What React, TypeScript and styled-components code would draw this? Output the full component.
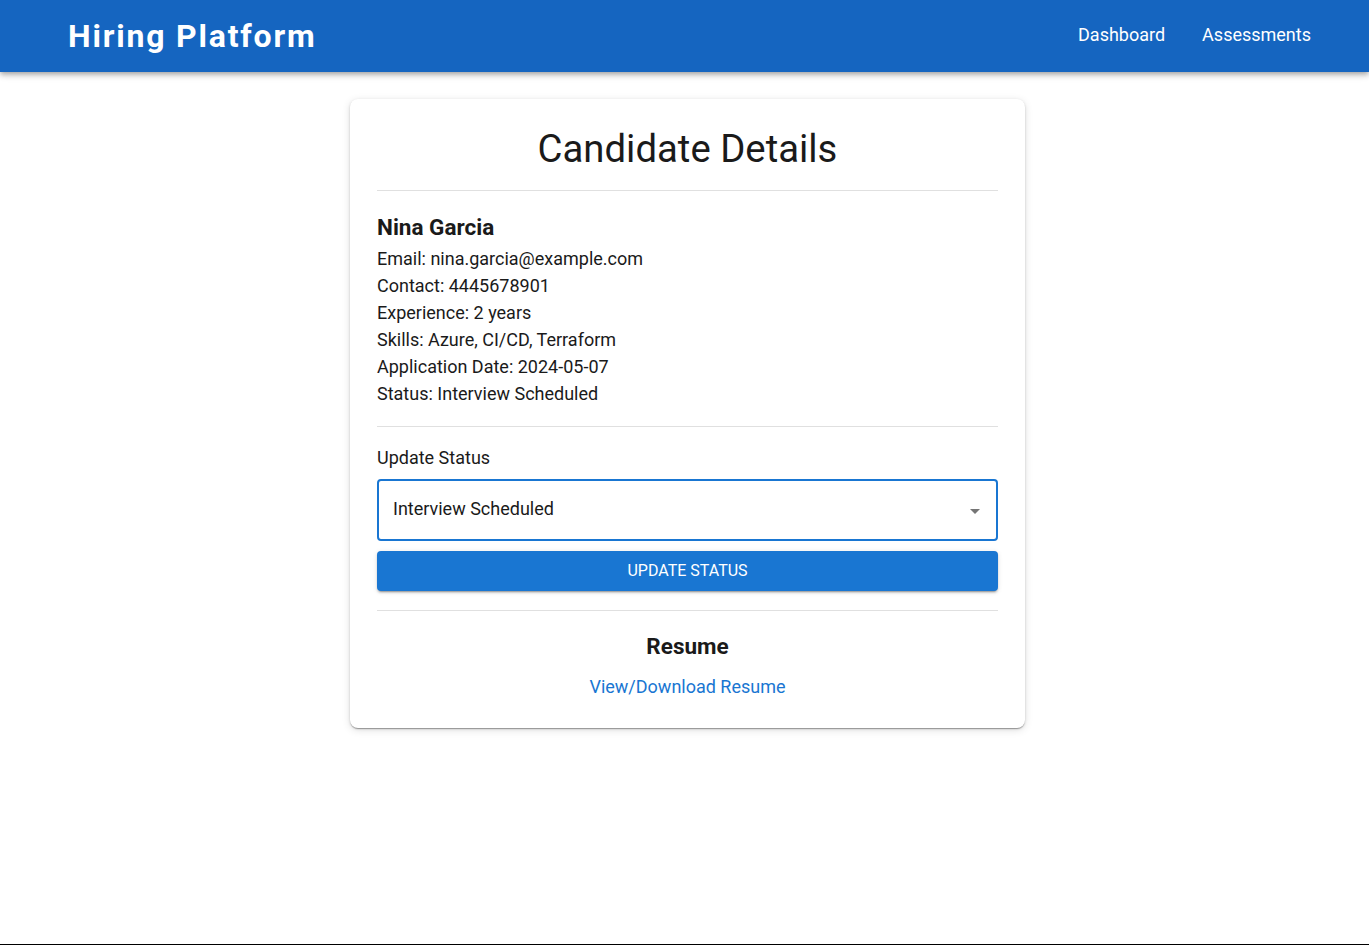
import React from "react";
import styled, { createGlobalStyle } from "styled-components";

const GlobalStyle = createGlobalStyle`
  html, body {
    margin: 0;
    padding: 0;
    background: #fff;
    font-family: Roboto, "Helvetica Neue", Arial, sans-serif;
    color: rgba(0, 0, 0, 0.87);
  }
  * { box-sizing: border-box; }
`;

const Page = styled.div`
  min-height: 945px;
  border-bottom: 1px solid #000;
`;

const AppBar = styled.header`
  height: 72px;
  background: #1565c0;
  color: #fff;
  display: flex;
  align-items: center;
  justify-content: space-between;
  padding: 0 58px 0 68px;
  box-shadow: 0 2px 4px -1px rgba(0, 0, 0, 0.2), 0 4px 5px 0 rgba(0, 0, 0, 0.14),
    0 1px 10px 0 rgba(0, 0, 0, 0.12);
`;

const Brand = styled.div`
  font-size: 32px;
  font-weight: 700;
  letter-spacing: 1.8px;
`;

const Nav = styled.nav`
  display: flex;
  gap: 37px;
`;

const NavLink = styled.a`
  font-size: 18px;
  font-weight: 400;
  color: #fff;
  text-decoration: none;
  margin-top: -3px;
`;

const Main = styled.main`
  display: flex;
  justify-content: center;
  padding: 27px 0 0 6px;
`;

const Card = styled.section`
  width: 675px;
  background: #fff;
  border-radius: 8px;
  padding: 25px 27px 29px;
  box-shadow: 0 2px 1px -1px rgba(0, 0, 0, 0.2), 0 1px 1px 0 rgba(0, 0, 0, 0.14),
    0 1px 3px 0 rgba(0, 0, 0, 0.12), 0 2px 8px rgba(0, 0, 0, 0.12);
`;

const Title = styled.h1`
  margin: 0;
  text-align: center;
  font-size: 38.3px;
  font-weight: 400;
  line-height: 50px;
  color: #1a1a1a;
`;

const Divider = styled.hr<{ $top: number; $bottom: number }>`
  border: none;
  border-top: 1px solid #e0e0e0;
  margin: ${(p) => p.$top}px 0 ${(p) => p.$bottom}px;
`;

const Name = styled.h2`
  margin: 0 0 3px;
  font-size: 22.5px;
  font-weight: 700;
  line-height: 30px;
  color: #1a1a1a;
`;

const Info = styled.p`
  margin: 0;
  font-size: 18px;
  line-height: 27px;
  color: #1a1a1a;
`;

const Label = styled.div`
  font-size: 18px;
  line-height: 24px;
  color: #1a1a1a;
  margin-bottom: 9px;
`;

const Select = styled.div`
  height: 62px;
  border: 2px solid #1976d2;
  border-radius: 4px;
  display: flex;
  align-items: center;
  justify-content: space-between;
  padding: 0 16px 3px 14px;
  font-size: 18px;
  color: #1a1a1a;
`;

const Caret = styled.span`
  width: 0;
  height: 0;
  border-left: 5px solid transparent;
  border-right: 5px solid transparent;
  border-top: 5px solid #757575;
  margin-top: 5px;
`;

const Button = styled.button`
  display: block;
  width: 100%;
  height: 40px;
  margin-top: 10px;
  padding-bottom: 2px;
  border: none;
  border-radius: 4px;
  background: #1976d2;
  color: #fff;
  font-family: Roboto, sans-serif;
  font-size: 16px;
  font-weight: 400;
  text-transform: uppercase;
  box-shadow: 0 3px 1px -2px rgba(0, 0, 0, 0.2), 0 2px 2px 0 rgba(0, 0, 0, 0.14),
    0 1px 5px 0 rgba(0, 0, 0, 0.12);
`;

const Centered = styled.div`
  text-align: center;
`;

const SubTitle = styled.h3`
  margin: 0 0 13px;
  font-size: 22.5px;
  font-weight: 700;
  line-height: 32px;
  color: #1a1a1a;
`;

const ResumeLink = styled.a`
  display: inline-block;
  color: #1976d2;
  font-size: 18px;
  line-height: 24px;
  text-decoration: none;
`;

const candidate = {
  name: "Nina Garcia",
  email: "nina.garcia@example.com",
  contact: "4445678901",
  experience: "2 years",
  skills: "Azure, CI/CD, Terraform",
  applied: "2024-05-07",
  status: "Interview Scheduled",
};

export default function App() {
  return (
    <Page>
      <GlobalStyle />
      <AppBar>
        <Brand>Hiring Platform</Brand>
        <Nav>
          <NavLink href="#">Dashboard</NavLink>
          <NavLink href="#">Assessments</NavLink>
        </Nav>
      </AppBar>
      <Main>
        <Card>
          <Title>Candidate Details</Title>
          <Divider $top={16} $bottom={21} />
          <Name>{candidate.name}</Name>
          <Info>Email: {candidate.email}</Info>
          <Info>Contact: {candidate.contact}</Info>
          <Info>Experience: {candidate.experience}</Info>
          <Info>Skills: {candidate.skills}</Info>
          <Info>Application Date: {candidate.applied}</Info>
          <Info>Status: {candidate.status}</Info>
          <Divider $top={19} $bottom={19} />
          <Label>Update Status</Label>
          <Select>
            <span>{candidate.status}</span>
            <Caret />
          </Select>
          <Button>Update Status</Button>
          <Divider $top={19} $bottom={19} />
          <Centered>
            <SubTitle>Resume</SubTitle>
            <ResumeLink href="#">View/Download Resume</ResumeLink>
          </Centered>
        </Card>
      </Main>
    </Page>
  );
}
